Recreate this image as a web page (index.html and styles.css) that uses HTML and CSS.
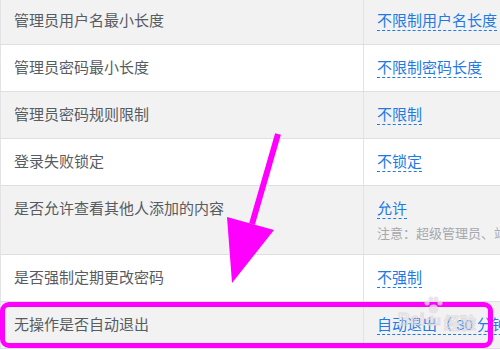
FILE: index.html
```html
<!DOCTYPE html>
<html lang="zh-CN">
<head>
    <meta charset="UTF-8">
    <title>安全设置</title>
    <link rel="stylesheet" href="styles.css">
</head>
<body>
<div class="page">
    <table class="setting-table">
        <tr class="row-gray">
            <td class="label">管理员用户名最小长度</td>
            <td class="value"><a class="link">不限制用户名长度</a></td>
        </tr>
        <tr>
            <td class="label">管理员密码最小长度</td>
            <td class="value"><a class="link">不限制密码长度</a></td>
        </tr>
        <tr class="row-gray">
            <td class="label">管理员密码规则限制</td>
            <td class="value"><a class="link">不限制</a></td>
        </tr>
        <tr>
            <td class="label">登录失败锁定</td>
            <td class="value"><a class="link">不锁定</a></td>
        </tr>
        <tr class="row-gray row-tall">
            <td class="label">是否允许查看其他人添加的内容</td>
            <td class="value">
                <a class="link">允许</a>
                <div class="note">注意：超级管理员、站点管理员可以查看所有内容</div>
            </td>
        </tr>
        <tr>
            <td class="label">是否强制定期更改密码</td>
            <td class="value"><a class="link">不强制</a></td>
        </tr>
        <tr class="row-gray">
            <td class="label">无操作是否自动退出</td>
            <td class="value"><a class="link">自动退出（ 30 分钟）</a></td>
        </tr>
    </table>

    <!-- 标注：箭头和框 -->
    <svg class="arrow" width="500" height="350" viewBox="0 0 500 350">
        <line x1="278" y1="134" x2="252" y2="224" stroke="#ff00ff" stroke-width="6"/>
        <polygon points="227,217 274,230 232,283" fill="#ff00ff"/>
    </svg>
    <div class="highlight-box"></div>

    <div class="watermark">
        <svg class="paw" width="22" height="20" viewBox="0 0 22 20">
            <circle cx="5" cy="7" r="2.5" fill="#e6dde6"/>
            <circle cx="9" cy="3" r="2.5" fill="#e6dde6"/>
            <circle cx="14" cy="3" r="2.5" fill="#e6dde6"/>
            <circle cx="18" cy="7" r="2.5" fill="#e6dde6"/>
            <ellipse cx="11.5" cy="13" rx="5" ry="4.5" fill="#e6dde6"/>
        </svg>
        <span class="wm-text">Bai</span><span class="wm-du">du</span><span class="wm-cn">经验</span>
    </div>
</div>
</body>
</html>
```

FILE: styles.css
```css
body {
    margin: 0;
    font-family: "Liberation Sans", "Noto Sans CJK SC", sans-serif;
    background: #ffffff;
    overflow: hidden;
}

.page {
    position: relative;
    width: 500px;
    height: 350px;
    overflow: hidden;
}

.setting-table {
    border-collapse: collapse;
    width: 560px;
    margin-top: -2px;
    table-layout: fixed;
}

.setting-table td {
    border-bottom: 1px solid #dfdfe2;
    padding: 13px 13px;
    line-height: 20px;
    font-size: 15px;
    vertical-align: top;
    white-space: nowrap;
}

.setting-table td.label {
    width: 336px;
    color: #575c62;
    border-left: 1px solid #e3e3e6;
    border-right: 1px solid #e3e3e6;
}

.setting-table td.value {
    color: #1f7ae6;
}

.row-gray td {
    background: #f2f2f2;
}

.row-tall td.value {
    padding-bottom: 11px;
}

.link {
    display: inline-block;
    color: #1f7ae6;
    line-height: 19px;
    border-bottom: 1px dashed #1f7ae6;
}

.note {
    margin-top: 6px;
    font-size: 13px;
    line-height: 18px;
    color: #a5a8ad;
}

.arrow {
    position: absolute;
    left: 0;
    top: 0;
}

.highlight-box {
    position: absolute;
    left: 0;
    top: 302px;
    width: 483px;
    height: 36px;
    border: 5px solid #ff00ff;
    border-radius: 9px;
}

.watermark {
    position: absolute;
    left: 398px;
    top: 296px;
    width: 90px;
    height: 36px;
    opacity: 0.8;
}

.paw {
    position: absolute;
    left: 24px;
    top: 0;
}

.wm-text,
.wm-du,
.wm-cn {
    position: absolute;
    top: 14px;
    font-size: 17px;
    font-weight: bold;
    color: transparent;
    -webkit-text-stroke: 1px #ddd6dd;
}

.wm-text {
    left: 0;
}

.wm-du {
    left: 28px;
    font-size: 12px;
    top: 18px;
}

.wm-cn {
    left: 46px;
    font-size: 16px;
}
```
